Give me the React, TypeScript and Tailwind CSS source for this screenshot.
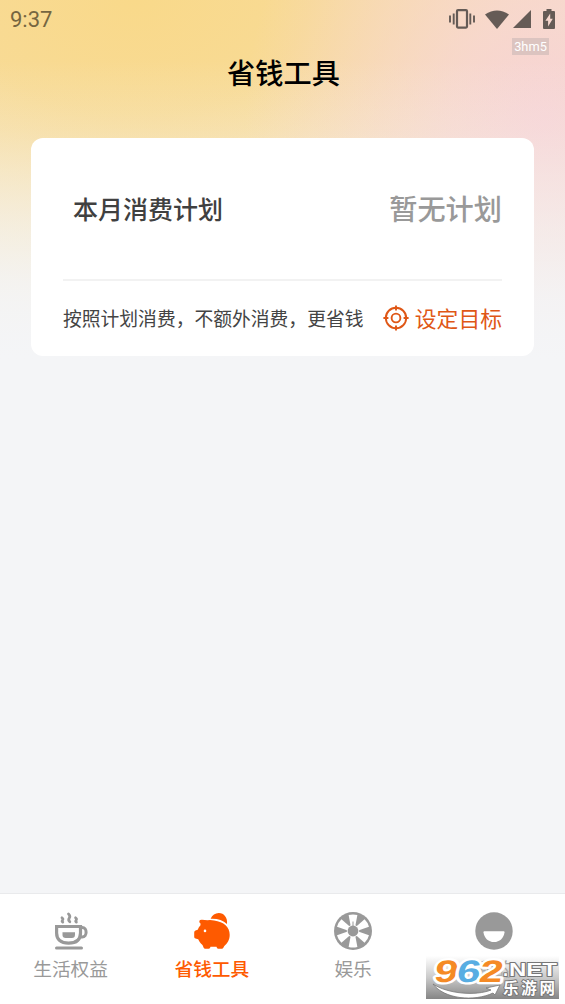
import React from "react";

const PLAN = { title: "本月消费计划", status: "暂无计划", tip: "按照计划消费，不额外消费，更省钱", action: "设定目标" };

function VibrateIcon() {
  return (
    <svg width="26" height="20" viewBox="0 0 26 20" fill="none" stroke="currentColor" strokeWidth="2">
      <rect x="8" y="1.2" width="10" height="17.4" rx="1" strokeWidth="2.2" />
      <path d="M1 6.5v7M4.7 4.5v11M21.3 4.5v11M25 6.5v7" strokeWidth="1.9" />
    </svg>
  );
}

function WifiIcon() {
  return (
    <svg width="24" height="19" viewBox="0 0 24 19" fill="currentColor">
      <path d="M0 4.4Q12-3.4 24 4.4L12 19Z" />
    </svg>
  );
}

function SignalIcon() {
  return (
    <svg width="18" height="18" viewBox="0 0 18 18" fill="currentColor">
      <path d="M18 0v18H0Z" />
    </svg>
  );
}

function BatteryIcon() {
  return (
    <svg width="12" height="20" viewBox="0 0 12 20" fill="currentColor">
      <path fillRule="evenodd" d="M3.5 0h5v2H11q1 0 1 1v16q0 1-1 1H1q-1 0-1-1V3q0-1 1-1h2.5ZM7.2 4.6 2.4 11.8h2.7v5.7l4.7-7.700H7.200Z" />
    </svg>
  );
}

function TargetIcon() {
  return (
    <svg width="26" height="26" viewBox="0 0 26 26" fill="none" stroke="currentColor" strokeWidth="1.9">
      <circle cx="13" cy="13" r="10.2" />
      <circle cx="13" cy="13" r="4.4" />
      <path d="M13 .4v5M13 20.6v5M.4 13h5M20.6 13h5" />
    </svg>
  );
}

function CupIcon() {
  return (
    <svg width="34" height="38" viewBox="0 0 34 38" fill="none" stroke="currentColor" strokeLinecap="round">
      <path d="M2.6 14.5h23.9v6.5c0 6.5-4.2 10.2-11.95 10.2S2.6 27.5 2.6 21Z" strokeWidth="3.2" />
      <path d="M27 15.5h1.2c5.2 0 5.2 9.5 0 9.5H26" strokeWidth="3" />
      <path d="M8.5 20.2h12.5v2.5q0 3.2-3.2 3.2h-6.1q-3.2 0-3.2-3.2Z" fill="currentColor" stroke="none" />
      <path d="M2.5 36h25" strokeWidth="3" />
      <path d="M8 5.8q1.5 1 .5 2.4t.3 1.9M14.5 2q2.2 2 .8 4t.5 3.700M21.600 5.800q1.500 1 .5 2.400t.3 1.900" strokeWidth="2.8" />
    </svg>
  );
}

function PiggyIcon() {
  return (
    <svg width="36" height="36" viewBox="0 0 36 36" fill="currentColor">
      <path d="M16.6 5.8C18.2 2.2 21.2.1 24.8.1c5.2 0 9 4.700 8.200 11C29 7.200 23.500 5.500 16.600 5.800Z" />
      <path fillRule="evenodd" d="M6.500 10.600Q4.700 9.200 5.400 7.800 5.900 6.600 8 6.700L13.500 7.200Q17 6.900 20 7.400C30 8.800 35.700 14 35.700 21.800c0 5.400-2.500 9-5.400 11.200L29.200 35q-.4.7-1.3.7h-3.700q-.8 0-1.200-.8l-.5-1.100h-6l-.5 1.100q-.4.8-1.300.8h-3.600q-.9 0-1.300-.8L8.500 32C6 30 5 27.800 4.200 26.200L1.500 25.500Q.2 25.200.2 23.800v-4.400q0-1.400 1.300-1.800l2.200-.8q1-3 2.800-4.600ZM11 16.600a1.300 1.300 0 1 0 0 2.600a1.300 1.300 0 1 0 0-2.600Z" />
    </svg>
  );
}

function WheelIcon() {
  return (
    <svg width="38" height="38" viewBox="0 0 38 38">
      <circle cx="19" cy="19" r="19" fill="currentColor" />
      <g fill="white">
        {[0, 60, 120, 180, 240, 300].map((angle) => (
          <path key={angle} d="M14.600 3.100Q19 1.800 23.400 3.100L21.400 13.500H16.600Z" transform={`rotate(${angle} 19 19)`} />
        ))}
        <circle cx="19" cy="19" r="6.200" />
      </g>
      <path d="M19 9.500v5" stroke="currentColor" strokeWidth="1" />
      <circle cx="19" cy="19" r="5.400" fill="currentColor" />
    </svg>
  );
}

function FaceIcon() {
  return (
    <svg width="38" height="38" viewBox="0 0 38 38">
      <circle cx="19" cy="19" r="18.700" fill="currentColor" />
      <path d="M9.200 19.200h19.600q.8 0 .7 1c-.7 6-5 9.800-10.500 9.800S9.200 26.200 8.500 20.200q-.1-1 .7-1Z" fill="white" />
    </svg>
  );
}

const TABS = [
  { label: "生活权益", icon: <CupIcon />, active: false },
  { label: "省钱工具", icon: <PiggyIcon />, active: true },
  { label: "娱乐", icon: <WheelIcon />, active: false },
  { label: "我的", icon: <FaceIcon />, active: false },
];

function SiteBadge() {
  return (
    <div className="absolute top-[62px] left-[426px] h-[43px] w-[133px] bg-linear-to-b from-white/0 via-[#b9b9b9]/75 to-[#858585]">
      <svg width="133" height="43" viewBox="0 0 133 43" className="block">
        <path d="M7 28C22 38 50 40 65 34l-5-2 14-3-5 10-2-2C48 46 18 43 7 28Z" fill="white" stroke="#777777" strokeWidth=".8" />
        <g fontFamily="Liberation Sans, Arial, sans-serif" fontWeight="700" strokeLinejoin="round" paintOrder="stroke">
          <g fontSize="31" stroke="white" strokeWidth="4.500" transform="translate(7 25.800) skewX(-10)">
            <text x="0" y="0" fill="#f58a25" textLength="23.500" lengthAdjust="spacingAndGlyphs">9</text>
            <text x="22.500" y="0" fill="#58ade2" textLength="23.500" lengthAdjust="spacingAndGlyphs">6</text>
            <text x="45" y="0" fill="#f58a25" textLength="23.500" lengthAdjust="spacingAndGlyphs">2</text>
          </g>
          <text x="77" y="20" fontSize="18.500" fill="white" stroke="#777777" strokeWidth="2">.</text>
          <g fontSize="18.500" fill="white" stroke="#777777" strokeWidth="2">
            <text x="83" y="20" textLength="48" lengthAdjust="spacingAndGlyphs">NET</text>
          </g>
        </g>
        <text x="77" y="38" fontFamily="Noto Sans CJK SC, sans-serif" fontWeight="700" fontSize="15.500" fill="white" stroke="#777777" strokeWidth="1.800" paintOrder="stroke" textLength="52">乐游网</text>
      </svg>
    </div>
  );
}

export default function App() {
  return (
    <div className="flex h-[1004px] w-[565px] flex-col overflow-hidden bg-[#f4f5f7] font-['Noto_Sans_CJK_SC',sans-serif]">
      <div className="flex flex-1 flex-col bg-[linear-gradient(to_bottom,#f4f5f700_60px,#f4f5f730_130px,#f4f5f790_220px,#f4f5f7e0_300px,#f4f5f7_360px),radial-gradient(ellipse_300px_340px_at_545px_120px,#f7d3d4_0%,#f7d5d5c0_32%,#f7d8d800_100%),radial-gradient(ellipse_620px_400px_at_135px_0px,#f9d98a_0%,#f8da90e8_28%,#f8dfa0b0_50%,#f7e8c560_73%,#f4f5f700_100%),linear-gradient(to_bottom,#f7dcba_0px,#f6dfc0_130px,#f4e6cc_250px,#f4f5f7_380px)]">
        <header>
          <div className="flex h-[38px] items-center justify-between px-[10px] text-[#655b56]">
            <time className="mt-[2px] font-[Roboto] text-[22px] leading-none text-[#756641]">9:37</time>
            <div className="flex items-center">
              <VibrateIcon />
              <span className="ml-[10px]"><WifiIcon /></span>
              <span className="ml-[4px]"><SignalIcon /></span>
              <span className="ml-[12px]"><BatteryIcon /></span>
            </div>
          </div>
          <div className="grid h-[100px] grid-cols-[1fr_auto_1fr] items-start">
            <h1 className="col-start-2 mt-[14px] ml-[2px] text-[28.2px] leading-[40px] font-medium text-black">省钱工具</h1>
            <span className="mr-4 flex h-[17px] w-[37px] items-center justify-center justify-self-end bg-[#dcc4c0] pt-px font-[Roboto] text-[12.8px] leading-none text-white">3hm5</span>
          </div>
        </header>

        <section className="mx-[31px] flex h-[218px] flex-col rounded-xl bg-white px-8">
          <div className="flex h-[143px] items-center justify-between border-b-2 border-[#f2f2f2] pl-[10px]">
            <h2 className="text-[25px] leading-none font-medium text-[#404040]">{PLAN.title}</h2>
            <span className="text-[28.2px] leading-none font-medium text-[#999999]">{PLAN.status}</span>
          </div>
          <div className="flex h-[75px] items-center justify-between whitespace-nowrap">
            <p className="text-[18.8px] leading-none text-[#444444]">{PLAN.tip}</p>
            <button className="mb-[2px] flex items-center gap-[6px] text-[21.8px] leading-none text-[#df5716]">
              <TargetIcon />
              {PLAN.action}
            </button>
          </div>
        </section>
      </div>

      <nav className="relative grid h-[111px] grid-cols-4 border-t border-[#e9eaec] bg-white pt-[17px]">
        {TABS.map((tab) => (
          <button key={tab.label} className={tab.active ? "flex flex-col items-center font-medium text-[#fe5a00]" : "flex flex-col items-center text-[#999999]"}>
            <span className="flex h-[39px] items-center">{tab.icon}</span>
            <span className="mt-[4px] text-[18.7px] leading-[28px]">{tab.label}</span>
          </button>
        ))}
        <SiteBadge />
      </nav>
    </div>
  );
}
